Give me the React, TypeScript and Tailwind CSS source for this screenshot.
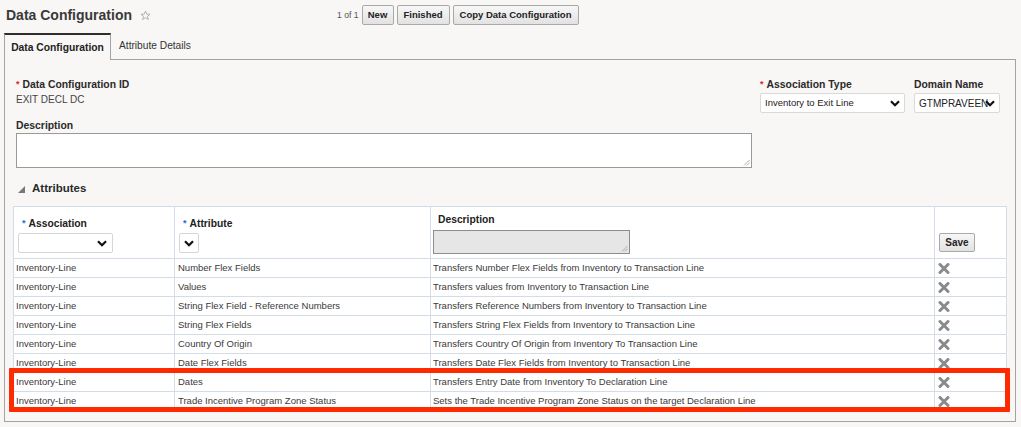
import React from "react"

const rows = [
  ["Inventory-Line", "Number Flex Fields", "Transfers Number Flex Fields from Inventory to Transaction Line"],
  ["Inventory-Line", "Values", "Transfers values from Inventory to Transaction Line"],
  ["Inventory-Line", "String Flex Field - Reference Numbers", "Transfers Reference Numbers from Inventory to Transaction Line"],
  ["Inventory-Line", "String Flex Fields", "Transfers String Flex Fields from Inventory to Transaction Line"],
  ["Inventory-Line", "Country Of Origin", "Transfers Country Of Origin from Inventory To Transaction Line"],
  ["Inventory-Line", "Date Flex Fields", "Transfers Date Flex Fields from Inventory to Transaction Line"],
  ["Inventory-Line", "Dates", "Transfers Entry Date from Inventory To Declaration Line"],
  ["Inventory-Line", "Trade Incentive Program Zone Status", "Sets the Trade Incentive Program Zone Status on the target Declaration Line"],
]

function Chevron() {
  return (
    <svg width="10" height="7" viewBox="0 0 10 7" className="shrink-0">
      <polyline points="1,1.2 5,5.2 9,1.2" fill="none" stroke="#111" strokeWidth="2.2" />
    </svg>
  )
}

function Grip() {
  return (
    <svg width="7" height="7" viewBox="0 0 7 7" className="absolute right-[1px] bottom-[1px]">
      <line x1="6.5" y1="1" x2="1" y2="6.5" stroke="#999" strokeWidth="0.8" />
      <line x1="6.5" y1="3.8" x2="3.8" y2="6.5" stroke="#999" strokeWidth="0.8" />
    </svg>
  )
}

function Remove() {
  return (
    <svg width="12" height="11" viewBox="0 0 12 11">
      <line x1="2" y1="1.5" x2="10" y2="9.5" stroke="#8a8a8a" strokeWidth="3" strokeLinecap="round" />
      <line x1="10" y1="1.5" x2="2" y2="9.5" stroke="#8a8a8a" strokeWidth="3" strokeLinecap="round" />
    </svg>
  )
}

function Btn({ label, w }: { label: string; w: string }) {
  return (
    <button
      className={`${w} h-[20px] flex items-center justify-center border border-[#a9a9a9] rounded-[2px] bg-gradient-to-b from-[#f7f7f7] to-[#e2e2e2] text-[9.5px] font-bold text-[#222]`}
    >
      {label}
    </button>
  )
}

export default function App() {
  return (
    <div className="w-[1021px] h-[427px] overflow-hidden bg-[#f8f7f5] font-['Liberation_Sans',Arial,sans-serif] text-[#333]">
      {/* Title bar */}
      <div className="h-[30px] flex items-center">
        <div className="w-[337px] flex items-center pl-[6px]">
          <span className="text-[14px] font-bold text-[#3a3a3a]">Data Configuration</span>
          <svg width="11" height="11" viewBox="0 0 24 24" className="ml-[8px]">
            <polygon
              points="12,2.5 14.8,9 21.8,9.3 16.4,13.8 18.2,20.7 12,16.8 5.8,20.7 7.6,13.8 2.2,9.3 9.2,9"
              fill="none"
              stroke="#9a9a9a"
              strokeWidth="1.6"
            />
          </svg>
        </div>
        <span className="text-[8.6px] text-[#555]">1 of 1</span>
        <div className="flex items-center gap-[3px] ml-[3px]">
          <Btn label="New" w="w-[32px]" />
          <Btn label="Finished" w="w-[53px]" />
          <Btn label="Copy Data Configuration" w="w-[126px]" />
        </div>
      </div>

      {/* Tabs */}
      <div className="mt-[3px] ml-[4px] w-[1012px] h-[27px] flex">
        <div className="w-[107px] border-t-2 border-t-[#2e2e2e] border-l border-r border-[#a3a3a3] flex items-center justify-center text-[10.3px] font-bold text-[#222]">
          Data Configuration
        </div>
        <div className="px-[8px] border-b border-[#a3a3a3] flex items-center text-[10.2px] text-[#333]">
          Attribute Details
        </div>
        <div className="flex-1 border-b border-[#a3a3a3]" />
      </div>

      {/* Panel */}
      <div className="ml-[4px] w-[1012px] h-[362px] border-l border-r border-b border-[#a3a3a3]">
        <div className="flex pt-[18px] pl-[11px]">
          <div className="w-[736px]">
            <div className="h-[14px] flex items-center text-[10.4px] font-bold text-[#2a2a2a]">
              <span className="text-[#e0201c] mr-[3px] text-[9px]">*</span>Data Configuration ID
            </div>
            <div className="h-[14px] flex items-center text-[10px] text-[#444]">EXIT DECL DC</div>
            <div className="mt-[13px] h-[14px] flex items-center text-[10.4px] font-bold text-[#2a2a2a]">Description</div>
            <div className="relative h-[35px] bg-white border border-[#9a9a9a]">
              <Grip />
            </div>
          </div>
          <div className="ml-[8px] w-[145px]">
            <div className="h-[14px] flex items-center text-[10.4px] font-bold text-[#2a2a2a]">
              <span className="text-[#e0201c] mr-[3px] text-[9px]">*</span>Association Type
            </div>
            <div className="mt-[1px] h-[20px] bg-white border border-[#d9d9d9] rounded-[2px] flex items-center justify-between pl-[4px] pr-[4px] text-[9.5px] text-[#222]">
              Inventory to Exit Line
              <Chevron />
            </div>
          </div>
          <div className="ml-[9px] w-[86px]">
            <div className="h-[14px] flex items-center text-[10.4px] font-bold text-[#2a2a2a]">Domain Name</div>
            <div className="mt-[1px] h-[20px] bg-white border border-[#d9d9d9] rounded-[2px] flex items-center pl-[4px] pr-[1px] text-[10px] text-[#222] overflow-hidden">
              <span className="whitespace-nowrap">GTMPRAVEEN</span>
              <span className="-ml-[3px]">
                <Chevron />
              </span>
            </div>
          </div>
        </div>

        {/* Attributes heading */}
        <div className="mt-[14px] h-[14px] flex items-center pl-[13px]">
          <svg width="7" height="7" viewBox="0 0 7 7">
            <polygon points="7,0 7,7 0,7" fill="#777" />
          </svg>
          <span className="ml-[7px] text-[11.5px] font-bold text-[#2a2a2a]">Attributes</span>
        </div>

        {/* Table */}
        <div className="relative mt-[10px] ml-[8px] w-[993px]">
          <table className="table-fixed border-collapse w-[993px] bg-white">
            <colgroup>
              <col className="w-[161px]" />
              <col className="w-[256px]" />
              <col className="w-[504px]" />
              <col className="w-[72px]" />
            </colgroup>
            <thead>
              <tr className="h-[52px]">
                <th className="border border-[#d3dde7] align-top text-left font-normal pt-[10px] pl-[4px]">
                  <div className="h-[14px] flex items-center ml-[4px] text-[10.3px] font-bold text-[#222]">
                    <span className="text-[#2b67d8] mr-[3px] text-[9px]">*</span>Association
                  </div>
                  <div className="mt-[2px] w-[95px] h-[20px] bg-white border border-[#d6d6d6] rounded-[2px] flex items-center justify-end pr-[5px]">
                    <Chevron />
                  </div>
                </th>
                <th className="border border-[#d3dde7] align-top text-left font-normal pt-[10px] pl-[4px]">
                  <div className="h-[14px] flex items-center ml-[4px] text-[10.3px] font-bold text-[#222]">
                    <span className="text-[#2b67d8] mr-[3px] text-[9px]">*</span>Attribute
                  </div>
                  <div className="mt-[2px] w-[20px] h-[20px] bg-white border border-[#d6d6d6] rounded-[2px] flex items-center justify-center">
                    <Chevron />
                  </div>
                </th>
                <th className="border border-[#d3dde7] align-top text-left font-normal pt-[6px] pl-[2px]">
                  <div className="h-[14px] flex items-center ml-[5px] text-[10.3px] font-bold text-[#222]">Description</div>
                  <div className="relative mt-[3px] w-[197px] h-[24px] bg-[#e6e6e6] border border-[#8d8d8d]">
                    <Grip />
                  </div>
                </th>
                <th className="border border-[#d3dde7] align-top text-left font-normal pt-[26px] pl-[4px]">
                  <button className="w-[36px] h-[19px] flex items-center justify-center border border-[#a9a9a9] rounded-[2px] bg-gradient-to-b from-[#f7f7f7] to-[#e2e2e2] text-[10px] font-bold text-[#222]">
                    Save
                  </button>
                </th>
              </tr>
            </thead>
            <tbody>
              {rows.map((r, i) => (
                <tr key={i} className="h-[19px] text-[9.5px] text-[#3a3a3a]">
                  <td className="border border-[#d3dde7] pl-[2px] whitespace-nowrap">{r[0]}</td>
                  <td className="border border-[#d3dde7] pl-[3px] whitespace-nowrap">{r[1]}</td>
                  <td className="border border-[#d3dde7] pl-[2px] whitespace-nowrap">{r[2]}</td>
                  <td className="border border-[#d3dde7] pl-[3px]">
                    <div className="flex items-center">
                      <Remove />
                    </div>
                  </td>
                </tr>
              ))}
            </tbody>
          </table>
          {/* highlight annotation */}
          <div className="absolute left-[-4px] top-[162px] w-[1001px] h-[44px] border-[5px] border-[#ff2a00] rounded-[1px] pointer-events-none" />
        </div>
      </div>
    </div>
  )
}
